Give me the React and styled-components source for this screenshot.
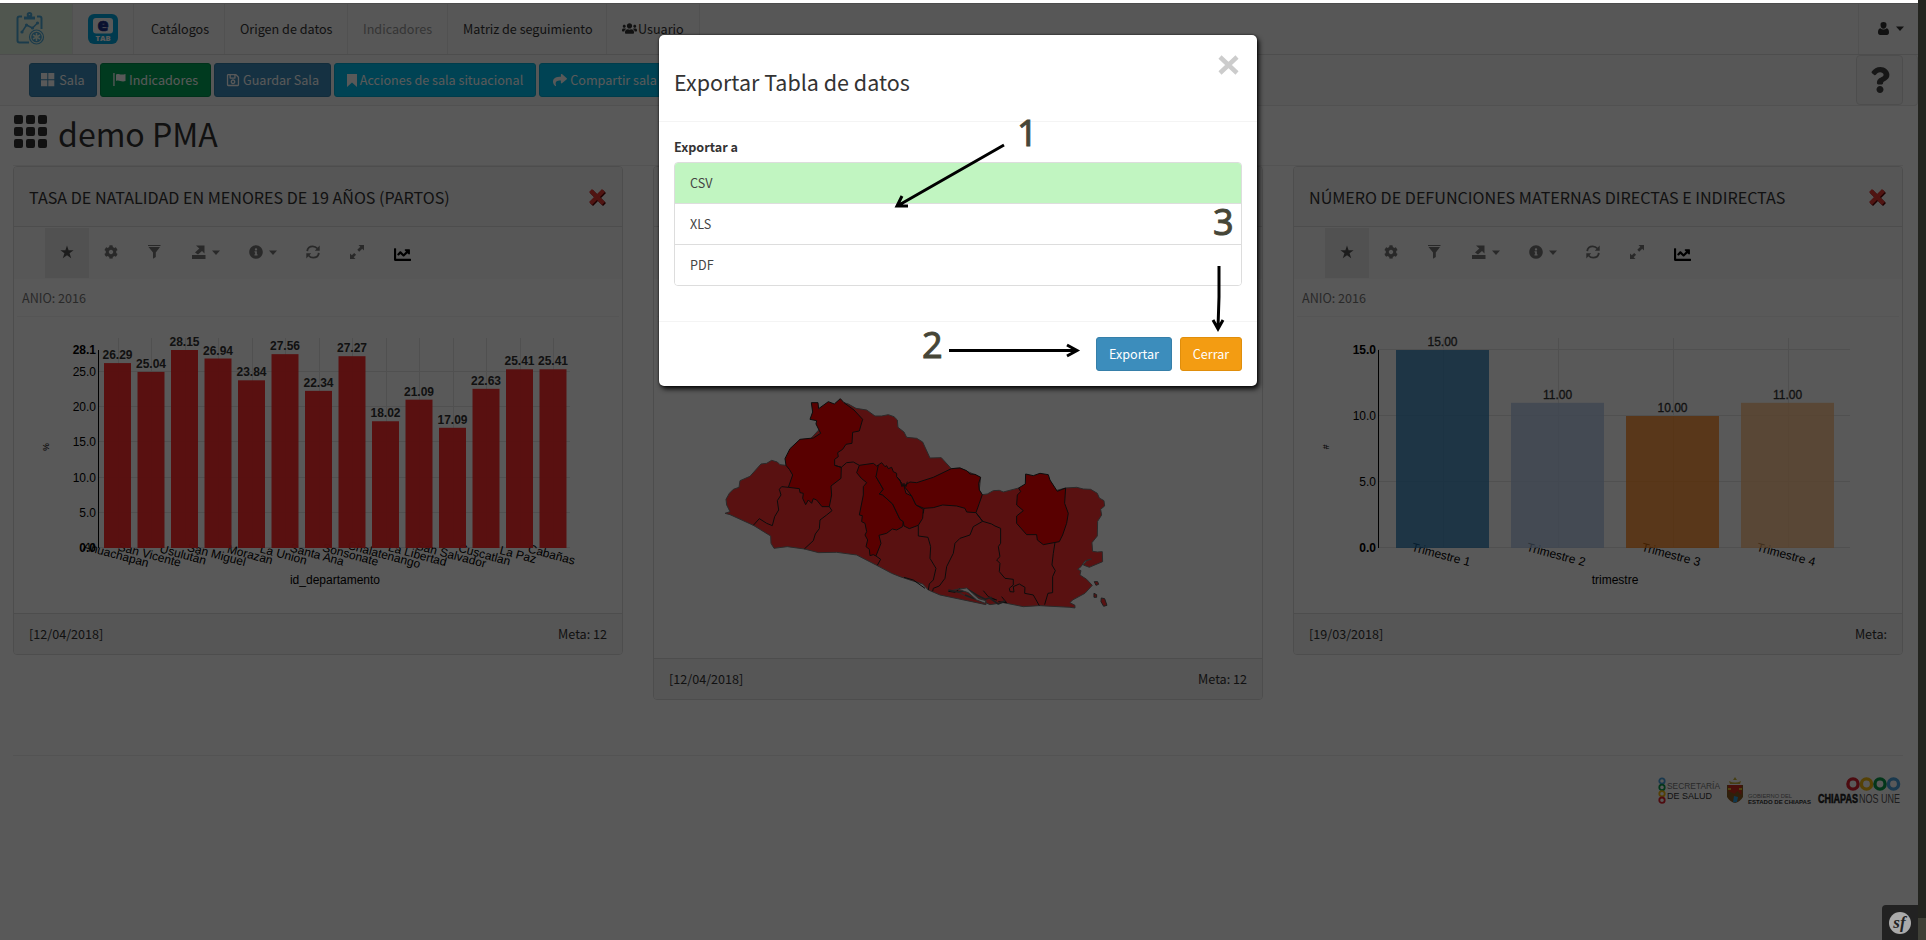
import React from "react";
import styled, { createGlobalStyle, css } from "styled-components";
import { FaUsers, FaShare, FaBookmark, FaCog, FaInfoCircle, FaRegSave, FaQuestion, FaChartLine } from "react-icons/fa";

const sans = `"Noto Sans CJK SC", "Noto Sans", sans-serif`;

const Global = createGlobalStyle`
  * { box-sizing: border-box; }
  body { margin: 0; background: #fff; font-family: ${sans}; font-size: 12.6px; line-height: 20px; color: #333; overflow: hidden; }
  svg { display: block; flex: none; overflow: visible; }
`;

const Window = styled.div`
  display: flex;
  width: 1926px;
  height: 940px;
  overflow: hidden;
`;
const Main = styled.main`
  position: relative;
  display: flex;
  flex-direction: column;
  width: 1918px;
  height: 940px;
  border-top: 3px solid #fff;
  background: #fff;
`;
const SideStrip = styled.div`
  display: flex;
  flex-direction: column;
  justify-content: flex-end;
  width: 8px;
  background: #23241f;
`;
const SideThumb = styled.div`
  height: 22px;
  background: #3f4037;
`;

const Navbar = styled.nav`
  display: flex;
  height: 52px;
  border-top: 1px solid #ddd;
  border-bottom: 1px solid #ddd;
  background: #f8f8f8;
`;
const NavItem = styled.div`
  display: flex;
  align-items: center;
  gap: 1px;
  width: ${(p) => p.$w}px;
  padding: 0 0 1px ${(p) => p.$pad ?? 17}px;
  border-right: 1px solid #e7e7e7;
  background: ${(p) => (p.$active ? "#e6f6e2" : "transparent")};
  color: ${(p) => (p.$muted ? "#999" : "#333")};
  white-space: nowrap;
`;
const UserMenu = styled.div`
  display: flex;
  align-items: center;
  gap: 7px;
  margin-left: auto;
  width: 60px;
  padding: 0 0 1px 19px;
  border-left: 1px solid #e7e7e7;
`;
const Toolbar = styled.div`
  display: flex;
  justify-content: space-between;
  height: 51px;
  padding: 0 14px 0 29px;
  border: solid #e7e7e7;
  border-width: 0 1px 1px 0;
  border-radius: 0 4px 4px 0;
  background: #f8f8f8;
`;
const ButtonRow = styled.div`
  display: flex;
  align-items: center;
  gap: 3px;
`;
const tones = {
  primary: ["#3c8dbc", "#367fa9"],
  success: ["#00a65a", "#008d4c"],
  info: ["#00c0ef", "#00acd6"],
  warning: ["#f39c12", "#e08e0b"],
};
const Button = styled.button`
  display: flex;
  align-items: center;
  justify-content: center;
  gap: ${(p) => p.$gap ?? 3}px;
  width: ${(p) => p.$w}px;
  height: 34px;
  padding: 0;
  border: 1px solid ${(p) => tones[p.$tone][1]};
  border-radius: 3px;
  background: ${(p) => tones[p.$tone][0]};
  color: #fff;
  font: 400 12.6px/20px ${sans};
  white-space: nowrap;
`;
const HelpButton = styled.div`
  display: flex;
  align-items: center;
  justify-content: center;
  width: 47px;
  height: 50px;
  border: 1px solid #ddd;
  border-radius: 4px;
  background: #f4f4f4;
  color: #444;
`;

const TitleRow = styled.header`
  display: flex;
  align-items: center;
  gap: 11px;
  height: 60px;
  margin: 0 15px 0 13px;
  padding: 0 0 8px 1px;
  border-bottom: 1px solid #eee;
`;
const Title = styled.h1`
  margin: 2px 0 0;
  font: 400 32.1px/40px ${sans};
`;
const Cards = styled.section`
  display: grid;
  grid-template-columns: repeat(3, 610px);
  gap: 30px;
  align-items: start;
  height: 590px;
  margin: 0 15px 0 13px;
  border-bottom: 1px solid #eee;
`;
const Card = styled.article`
  border: 1px solid #ddd;
  border-radius: 4px;
  overflow: hidden;
  background: #fff;
`;
const CardHeader = styled.div`
  display: flex;
  align-items: center;
  justify-content: space-between;
  height: 60px;
  padding: 0 15px 0 15px;
  border-bottom: 1px solid #ddd;
  background: #f5f5f5;
  font-size: 16.12px;
  white-space: nowrap;
`;
const CardTools = styled.div`
  display: flex;
  align-items: center;
  height: 52px;
  padding-left: 31px;
  background: #f8f8f8;
  color: #777;
`;
const Tool = styled.div`
  display: flex;
  align-items: center;
  gap: 6px;
  width: ${(p) => p.$w ?? 44}px;
  height: 50px;
  padding: 0 0 2px 15px;
  ${(p) => p.$on && css`background: #e7e7e7; color: #555;`}
  ${(p) => p.$dark && css`color: #000; padding-top: 4px;`}
`;
const Filters = styled.div`
  height: 38px;
  margin: 0 3px;
  padding: 9px 0 0 5px;
  border-bottom: 1px solid #f3f3f3;
  color: #777;
`;
const CardFooter = styled.div`
  display: flex;
  justify-content: space-between;
  height: 41px;
  padding: 10px 15px 0 15px;
  border-top: 1px solid #ddd;
  background: #f5f5f5;
`;

const PageFooter = styled.footer`
  display: flex;
  justify-content: flex-end;
  padding: 20px 16px 0 0;
`;

const Backdrop = styled.div`
  position: absolute;
  inset: 0;
  background: rgba(0, 0, 0, 0.65);
`;
const Profiler = styled.div`
  position: absolute;
  right: 0;
  bottom: 0;
  display: flex;
  align-items: center;
  justify-content: center;
  width: 36px;
  height: 35px;
  border-radius: 4px 0 0 0;
  background: #222;
`;
const Modal = styled.div`
  position: absolute;
  left: 659px;
  top: 32px;
  width: 598px;
  height: 351px;
  border-radius: 5px;
  background: #fff;
  box-shadow: 2px 3px 5px rgba(0, 0, 0, 0.9), 0 0 2px rgba(0, 0, 0, 0.8);
`;
const ModalHeader = styled.div`
  display: flex;
  justify-content: space-between;
  height: 87px;
  padding: 20px 18px 0 15px;
  border-bottom: 1px solid #f4f4f4;
`;
const ModalTitle = styled.h2`
  margin: 12px 0 0;
  font: 400 21.5px/30px ${sans};
`;
const ModalBody = styled.div`
  height: 200px;
  padding: 15px;
  border-bottom: 1px solid #f4f4f4;
`;
const Label = styled.div`
  height: 25px;
  font-weight: 700;
`;
const Options = styled.div`
  border: 1px solid #ddd;
  border-radius: 4px;
  overflow: hidden;
`;
const Option = styled.div`
  height: 40px;
  padding: 10px 15px;
  background: ${(p) => (p.$on ? "#c1f5c1" : "#fff")};
  color: #444;
  & + & { height: 41px; border-top: 1px solid #ddd; }
`;
const ModalFooter = styled.div`
  display: flex;
  justify-content: flex-end;
  gap: 8px;
  padding: 15px;
`;
const Annotations = styled.svg`
  position: absolute;
  left: 659px;
  top: 32px;
  font: 36px "Noto Sans", sans-serif;
`;

const Caret = () => (
  <svg width="8" height="5" viewBox="0 0 8 5"><path d="M0 .5h8L4 5z" fill="currentColor" /></svg>
);
const Glyph = ({ d, w = 14, h = 14 }) => (
  <svg width={w} height={h} viewBox={`0 0 ${w} ${h}`} fill="currentColor"><path d={d} fillRule="evenodd" /></svg>
);
const CloseRed = () => (
  <svg width="20" height="20" viewBox="0 0 20 20">
    <path d="M2 5 5 2l5 5 5-5 3 3-5 5 5 5-3 3-5-5-5 5-3-3 5-5z" fill="#500" transform="translate(1 1)" />
    <path d="M2 5 5 2l5 5 5-5 3 3-5 5 5 5-3 3-5-5-5 5-3-3 5-5z" fill="#e53935" />
  </svg>
);
const Clipboard = () => (
  <svg width="29" height="34" viewBox="0 0 29 34" fill="none" stroke="#4fa9d6" strokeWidth="2">
    <path d="M6 4.500H3.500a2 2 0 0 0-2 2v22a2 2 0 0 0 2 2H13M21 4.500h2.500a2 2 0 0 1 2 2V17" />
    <path d="M8 7.500V4.500h3a3 3 0 0 1 5 0h3v3z" fill="#4fa9d6" stroke="none" />
    <circle cx="13.500" cy="2.800" r="1.800" />
    <path d="m6 20 4.500-7 6 3 5-5" strokeWidth="1.500" />
    <g fill="#4fa9d6" stroke="none"><circle cx="6" cy="20" r="1.600" /><circle cx="10.500" cy="13" r="1.600" /><circle cx="16.500" cy="16" r="1.600" /><circle cx="21.500" cy="11" r="1.600" /></g>
    <circle cx="20.500" cy="25" r="7" strokeWidth="1.200" /><circle cx="20.500" cy="25" r="5.300" fill="#4fa9d6" stroke="none" />
    <path d="M20.500 21v8M17 23l7 4M24 23l-7 4" stroke="#e6f6e2" strokeWidth="1.500" />
  </svg>
);
const ETab = () => (
  <svg width="30" height="30" viewBox="0 0 30 30">
    <rect width="30" height="30" rx="6" fill="#00a7df" />
    <rect x="5" y="4" width="20" height="15.500" rx="3" fill="#fff" />
    <text x="15" y="16.500" textAnchor="middle" fontFamily="Open Sans" fontWeight="800" fontSize="18" fill="#1c2f86" stroke="#1c2f86" strokeWidth=".7">e</text>
    <text x="15" y="27" textAnchor="middle" fontFamily="Open Sans" fontWeight="800" fontSize="7.600" fill="#fff">TAB</text>
  </svg>
);

const starPath = "M7 .5l1.600 4.800h5L9.600 8.300l1.600 5L7 10.300l-4.200 3 1.600-5L.4 5.300h5z";
function ToolStrip() {
  return (
    <CardTools>
      <Tool $on><Glyph d={starPath} /></Tool>
      <Tool><FaCog size={14} /></Tool>
      <Tool><Glyph w={13} d="M0 0h12.500v1H0zM.5 2h11.500L7.800 7.500V12L5 13.700V7.500z" /></Tool>
      <Tool $w={57}><Glyph d="M0 10h13.500v4H0zM4 .5h8.500v8L10 6 6 9.500 3 7.500 7.300 3.500z" /><Caret /></Tool>
      <Tool $w={57}><FaInfoCircle size={14} /><Caret /></Tool>
      <Tool>
        <svg width="14" height="14" viewBox="0 0 14 14" fill="none" stroke="currentColor" strokeWidth="1.800">
          <path d="M1.200 6.200C1.500 3 4 1.300 6.800 1.300c2 0 3.400.8 4.600 2.200M12.800 7.800c-.3 3.200-2.800 4.900-5.600 4.900-2 0-3.400-.8-4.600-2.200" />
          <path d="M13.700.5v5.200H8.800zM.3 13.500V8.300h4.900z" fill="currentColor" stroke="none" />
        </svg>
      </Tool>
      <Tool><Glyph d="M8.500 0H14v5.500l-1.800-1.800-3 3L7.300 4.800l3-3zM5.500 14H0V8.500l1.800 1.800 2.400-2.400 1.900 1.900-2.400 2.400z" /></Tool>
      <Tool $dark><FaChartLine size={17} /></Tool>
    </CardTools>
  );
}

const departments = [
  ["Ahuachapan", 26.29], ["San Vicente", 25.04], ["Usulután", 28.15], ["San Miguel", 26.94], ["Morazan", 23.84],
  ["La Union", 27.56], ["Santa Ana", 22.34], ["Sonsonate", 27.27], ["Chalatenango", 18.02], ["La Libertad", 21.09],
  ["San Salvador", 17.09], ["Cuscatlan", 22.63], ["La Paz", 25.41], ["Cabañas", 25.41],
].map(([name, value]) => ({ name, value, color: "#fe2828" }));
const quarters = [
  ["Trimestre 1", 15, "#1f77b4"], ["Trimestre 2", 11, "#aec7e8"], ["Trimestre 3", 10, "#ff7f0e"], ["Trimestre 4", 11, "#ffbb78"],
].map(([name, value, color]) => ({ name, value, color }));

const ChartSvg = styled.svg`
  font: 12px "Liberation Sans", Arial, sans-serif;
`;
function BarChart({ data, max, ticks, limits, first, step, barWidth, opacity, valueWeight, axisName, yName, right = 556 }) {
  const base = 231;
  const y = (v) => base - (v / max) * 198;
  return (
    <ChartSvg width="608" height="296">
      {ticks.map((t) => (
        <g key={t}>
          <path d={`M84 ${Math.round(y(t)) - 0.5}H${right}`} stroke="#e5e5e5" />
          {!(limits.includes(t.toFixed(1)) && t > 0) && (
            <text x="82" y={y(t) + 4} textAnchor="end">{t > 0 ? t.toFixed(1) : ""}</text>
          )}
        </g>
      ))}
      {limits.map((t, i) => (
        <text key={t} x="82" y={(i ? 33 : base) + 4} textAnchor="end" fontWeight="700">{t}</text>
      ))}
      <path d="M84.500 33V231" stroke="#000" />
      {data.map((d, i) => {
        const cx = first + i * step;
        return (
          <g key={d.name}>
            <path d={`M${Math.round(cx) + 0.5} 21V231`} stroke="#e5e5e5" />
            <text transform={`translate(${cx - 2.5} 241.5) rotate(15)`} textAnchor="middle">{d.name}</text>
          </g>
        );
      })}
      {data.map((d, i) => {
        const cx = first + i * step;
        return (
          <g key={d.name}>
            <rect x={cx - barWidth / 2} y={y(d.value)} width={barWidth} height={base - y(d.value)} fill={d.color} fillOpacity={opacity} />
            <text x={cx} y={y(d.value) - 4} textAnchor="middle" fontWeight={valueWeight} stroke="#333" strokeWidth={valueWeight === 700 ? 0 : 0.3} fill="#333">{d.value.toFixed(2)}</text>
          </g>
        );
      })}
      <text x={(84 + right) / 2 + 1} y="267" textAnchor="middle">{axisName}</text>
      <text transform="translate(35 130) rotate(-90)" textAnchor="middle" fontSize="8.500">{yName}</text>
    </ChartSvg>
  );
}

const countryShape = "M75 400 90 395 80 375 78 358 88 340 100 328 117 322 120 302 150 289 183 252 200 250 215 241 232 246 240 254 258 256 432 68 445 72 468 85 500 90 525 108 545 108 565 104 582 110 592 120 594 142 612 156 620 172 650 175 668 186 690 234 724 233 754 266 780 264 842 292 838 330 847 344 862 342 880 332 898 331 910 336 956 324 1000 350 1097 324 1130 322 1150 327 1172 328 1192 340 1198 354 1212 362 1214 378 1202 388 1205 405 1193 424 1192 468 1176 488 1178 514 1192 516 1207 515 1208 545 1168 562 1150 555 1160 542 1174 537 1155 543 1143 560 1133 568 1143 572 1140 585 1160 598 1177 616 1155 640 1118 660 1110 668 1125 676 1125 684 1110 682 1018 677 970 680 910 668 870 674 840 660 800 650 770 634 745 634 780 626 810 632 858 662 858 674 720 645 685 630 668 612 630 600 600 590 575 580 530 556 470 525 410 517 356 518 313 507 262 500 222 505 213 490 212 468 160 436 90 404z";
const highRateShapes = [
  "M258 256 255 236 270 206 300 178 340 174 362 160 348 132 350 122 330 118 338 96 334 68 354 68 356 86 385 65 403 72 421 56 432 68 462 90 488 118 478 153 458 157 456 190 438 193 428 208 413 218 415 230 404 238 404 256 424 262 423 295 393 318 395 345 388 380 366 380 350 360 340 356 335 370 325 360 317 374 308 355 310 340 300 338 298 326 265 322 278 285 268 268z",
  "M478 256 520 250 530 258 535 255 535 275 528 290 550 328 538 342 548 345 578 372 600 418 610 425 608 440 590 450 577 447 560 460 537 466 543 490 528 528 520 524 510 527 508 508 498 500 503 480 495 465 500 455 495 430 485 425 487 407 478 405 490 345 490 320 500 308 484 295 470 278z",
  "M535 255 545 248 555 260 560 257 565 266 575 262 580 275 590 280 590 290 612 318 618 340 635 348 648 375 670 388 668 415 655 436 628 446 612 438 610 425 600 418 578 372 548 345 538 342 550 328 528 290z",
  "M612 318 630 306 650 308 700 292 754 266 780 264 800 272 810 282 825 283 842 292 836 310 838 330 847 344 838 370 828 398 800 396 795 385 770 378 728 375 700 383 672 385 648 375 635 348z",
  "M976 312 977 282 1000 287 1020 280 1045 284 1050 300 1072 334 1097 324 1094 370 1105 400 1100 430 1088 465 1078 485 1030 494 1012 480 1010 464 980 464 950 430 950 408 970 392 950 375 952 345 962 335 956 324z",
];
const innerBorders = "M265 322 245 320 238 328 243 345 232 362 236 390 224 410 217 437 200 430 178 416 160 436M388 380 396 392 380 405 360 420 358 446 346 462 340 482 313 507M404 256 424 262 440 248 460 246 478 256M528 528 542 538 532 556M655 436 655 468 684 472 692 500 690 535 708 565 700 600 688 612 685 630M672 385 670 400M828 398 848 424 820 440 810 465 780 475 765 490 760 520 740 560 735 595 718 618 700 625 698 634M828 398 848 424 875 432 885 438 902 445 902 490 895 500 900 530 890 540 900 550 898 575 915 595 940 598 940 615 928 625 930 635 942 636 940 620 958 612 975 622 974 640 1000 645 1018 677M1065 488 1060 520 1056 555 1066 572 1058 590 1058 638 1044 640 1034 674M590 290 600 300 606 320 612 310 618 320 622 305M612 592 640 600 675 625M745 634 765 637 780 626M850 632 865 650 890 660 870 655M905 650 920 668 895 665";

function CountryMap() {
  return (
    <svg width="608" height="341">
      <g transform="translate(46 63) scale(.3333)" stroke="#222" strokeWidth="3" strokeLinejoin="round">
        <path d={countryShape} fill="#fe3333" stroke="#777" />
        {highRateShapes.map((d) => <path key={d} d={d} fill="#f00" stroke="#222" />)}
        <path d={innerBorders} fill="none" />
        <path d="M745 630 775 636 800 632 818 648 850 664 820 655 795 645M800 626 830 645 856 658 875 652M870 655 895 672 915 662" stroke="#555" fill="none" strokeWidth="5" />
        <path d="M775 628 800 624 818 640 836 656 858 662 855 670 830 660 805 638z" fill="#fff" stroke="#777" />
        <path d="M1183 605l10 0 3 8-8 3zM1182 640l8 4 0 8-8 0zM1204 654l10 2 7 20-10 3-8-14z" fill="#fe3333" stroke="#555" />
      </g>
    </svg>
  );
}

function Logos() {
  const rings = ["#4aa3df", "#0a9a4a", "#f2b90f", "#e0242f"];
  return (
    <svg width="245" height="30" viewBox="0 0 245 30" fontFamily="Liberation Sans, Arial, sans-serif" fill="#333">
      {rings.map((c, i) => <circle key={c} cx="5" cy={5 + i * 6.4} r="2.700" fill="none" stroke={c} strokeWidth="1.800" />)}
      <text x="10" y="13" fontSize="9.200" textLength="53" lengthAdjust="spacingAndGlyphs" fill="#777">SECRETARÍA</text>
      <text x="10" y="22.500" fontSize="9.200" textLength="45" lengthAdjust="spacingAndGlyphs">DE SALUD</text>
      <path d="M72 5q6 3 12 0l-1 3H73zM76 4l2-3 2 3z" fill="#c9b43a" />
      <path d="M70 9h16v12q-3 5-8 6-5-1-8-6z" fill="#8a5a20" />
      <path d="M71.500 9h13v10l-4-4-3 3-6-3z" fill="#d0301d" />
      <path d="M77 20l4 1-1 5-4 .5z" fill="#2b9fe0" />
      <path d="M71 12h3v2h-3zM82 12h3v2h-3z" fill="#e3c02c" />
      <text x="91" y="22" fontSize="5.400" textLength="44" lengthAdjust="spacingAndGlyphs" fill="#777">GOBIERNO DEL</text>
      <text x="91" y="28" fontSize="5.600" fontWeight="700" textLength="63" lengthAdjust="spacingAndGlyphs">ESTADO DE CHIAPAS</text>
      {["#d9222e", "#f2b90f", "#0a9a4a", "#4aa3df"].map((c, i) => <circle key={c} cx={196 + i * 13.5} cy="8" r="5.100" fill="none" stroke={c} strokeWidth="3.400" />)}
      <text x="161" y="27" fontSize="12" fontWeight="700" stroke="#222" strokeWidth=".5" fill="#222" textLength="40" lengthAdjust="spacingAndGlyphs">CHIAPAS</text>
      <text x="202" y="27" fontSize="12" textLength="41" lengthAdjust="spacingAndGlyphs" fill="#555">NOS UNE</text>
    </svg>
  );
}

function IndicatorCard({ title, date, meta, filter = "ANIO: 2016", children }) {
  return (
    <Card>
      <CardHeader><span>{title}</span><CloseRed /></CardHeader>
      <ToolStrip />
      <Filters>{filter}</Filters>
      {children}
      <CardFooter><span>{date}</span><span>{meta}</span></CardFooter>
    </Card>
  );
}

export default function App() {
  return (
    <Window>
      <Global />
      <Main>
        <Navbar>
          <NavItem $w={73} $active $pad={16}><Clipboard /></NavItem>
          <NavItem $w={61} $pad={15}><ETab /></NavItem>
          <NavItem $w={91}>Catálogos</NavItem>
          <NavItem $w={123} $pad={15}>Origen de datos</NavItem>
          <NavItem $w={100} $muted $pad={15}>Indicadores</NavItem>
          <NavItem $w={159} $pad={15}>Matriz de seguimiento</NavItem>
          <NavItem $w={93} $pad={15}><FaUsers size={15} />Usuario</NavItem>
          <UserMenu>
            <Glyph w={11} h={13} d="M5.500 0a3 3 0 0 1 3 3.300c0 1.900-1.300 3.400-3 3.400s-3-1.500-3-3.400A3 3 0 0 1 5.500 0zM2.400 6.200c1.700 1.600 4.500 1.600 6.200 0C10.500 6.500 11 8.500 11 10.500c0 1.600-.8 2.500-2.100 2.500H2.100C.8 13 0 12.100 0 10.500 0 8.500.5 6.500 2.400 6.200z" />
            <Caret />
          </UserMenu>
        </Navbar>
        <Toolbar>
          <ButtonRow>
            <Button $tone="primary" $w={68} $gap={4}><Glyph d="M0 0h6.300v6.300H0zM7.300 0h6v6.300h-6zM0 7.300h6.300v6H0zM7.300 7.300h6v6h-6z" />Sala</Button>
            <Button $tone="success" $w={111}><Glyph w={13} d="M.3 0h1.300v13H.3zM3 1.500C5-.3 7 2.800 12.500 1v7C8 9.500 6 6.300 3 8z" />Indicadores</Button>
            <Button $tone="primary" $w={117}><FaRegSave size={14} />Guardar Sala</Button>
            <Button $tone="info" $w={202}><Glyph w={10} h={13} d="M0 0h10v13L5 8.500 0 13z" />Acciones de sala situacional</Button>
            <Button $tone="info" $w={132}><FaShare size={14} />Compartir sala</Button>
          </ButtonRow>
          <HelpButton><FaQuestion size={26} /></HelpButton>
        </Toolbar>
        <TitleRow>
          <Glyph w={33} h={33} d="M2 0h5q2 0 2 2v5q0 2-2 2H2Q0 9 0 7V2Q0 0 2 0zM14 0h5q2 0 2 2v5q0 2-2 2h-5q-2 0-2-2V2q0-2 2-2zM26 0h5q2 0 2 2v5q0 2-2 2h-5q-2 0-2-2V2q0-2 2-2zM2 12h5q2 0 2 2v5q0 2-2 2H2q-2 0-2-2v-5q0-2 2-2zM14 12h5q2 0 2 2v5q0 2-2 2h-5q-2 0-2-2v-5q0-2 2-2zM26 12h5q2 0 2 2v5q0 2-2 2h-5q-2 0-2-2v-5q0-2 2-2zM2 24h5q2 0 2 2v5q0 2-2 2H2q-2 0-2-2v-5q0-2 2-2zM14 24h5q2 0 2 2v5q0 2-2 2h-5q-2 0-2-2v-5q0-2 2-2zM26 24h5q2 0 2 2v5q0 2-2 2h-5q-2 0-2-2v-5q0-2 2-2z" />
          <Title>demo PMA</Title>
        </TitleRow>
        <Cards>
          <IndicatorCard title="TASA DE NATALIDAD EN MENORES DE 19 AÑOS (PARTOS)" date="[12/04/2018]" meta="Meta: 12">
            <BarChart data={departments} max={28.15} limits={["0.0", "28.1"]} ticks={[0, 5, 10, 15, 20, 25]} first={103.5} step={33.5} barWidth={27} opacity={0.96} valueWeight={700} axisName="id_departamento" yName="%" />
          </IndicatorCard>
          <IndicatorCard title="" filter="" date="[12/04/2018]" meta="Meta: 12">
            <CountryMap />
          </IndicatorCard>
          <IndicatorCard title="NÚMERO DE DEFUNCIONES MATERNAS DIRECTAS E INDIRECTAS" date="[19/03/2018]" meta="Meta:">
            <BarChart data={quarters} max={15} limits={["0.0", "15.0"]} ticks={[0, 5, 10, 15]} first={148.5} step={115} barWidth={93} opacity={0.75} valueWeight={400} axisName="trimestre" yName="#" />
          </IndicatorCard>
        </Cards>
        <PageFooter><Logos /></PageFooter>
        <Backdrop />
        <Profiler>
          <svg width="22" height="22" viewBox="0 0 22 22">
            <circle cx="11" cy="11" r="11" fill="#aaa" />
            <text x="10.500" y="15.500" textAnchor="middle" fontFamily="Liberation Serif" fontStyle="italic" fontWeight="700" fontSize="17" fill="#222">sf</text>
          </svg>
        </Profiler>
        <Modal>
          <ModalHeader>
            <ModalTitle>Exportar Tabla de datos</ModalTitle>
            <svg width="21" height="20" viewBox="0 0 21 20"><path d="M2 2 19 18M19 2 2 18" stroke="#ccc" strokeWidth="4.500" /></svg>
          </ModalHeader>
          <ModalBody>
            <Label>Exportar a</Label>
            <Options>
              <Option $on>CSV</Option>
              <Option>XLS</Option>
              <Option>PDF</Option>
            </Options>
          </ModalBody>
          <ModalFooter>
            <Button $tone="primary" $w={76}>Exportar</Button>
            <Button $tone="warning" $w={62}>Cerrar</Button>
          </ModalFooter>
        </Modal>
        <Annotations width="598" height="351" fill="#464637">
          <g stroke="#464637" strokeWidth=".9">
            <text x="358" y="111">1</text>
            <text x="263" y="323">2</text>
            <text x="554" y="200">3</text>
          </g>
          <g fill="none" stroke="#000" strokeWidth="3">
            <path d="M345 110 240 170M243 161 238 171H249" />
            <path d="M290 315.500H418M408 310 418 315.500 408 321" />
            <path d="M560 231V262L559 293M554 285 559 294 564 285" />
          </g>
        </Annotations>
      </Main>
      <SideStrip><SideThumb /></SideStrip>
    </Window>
  );
}
